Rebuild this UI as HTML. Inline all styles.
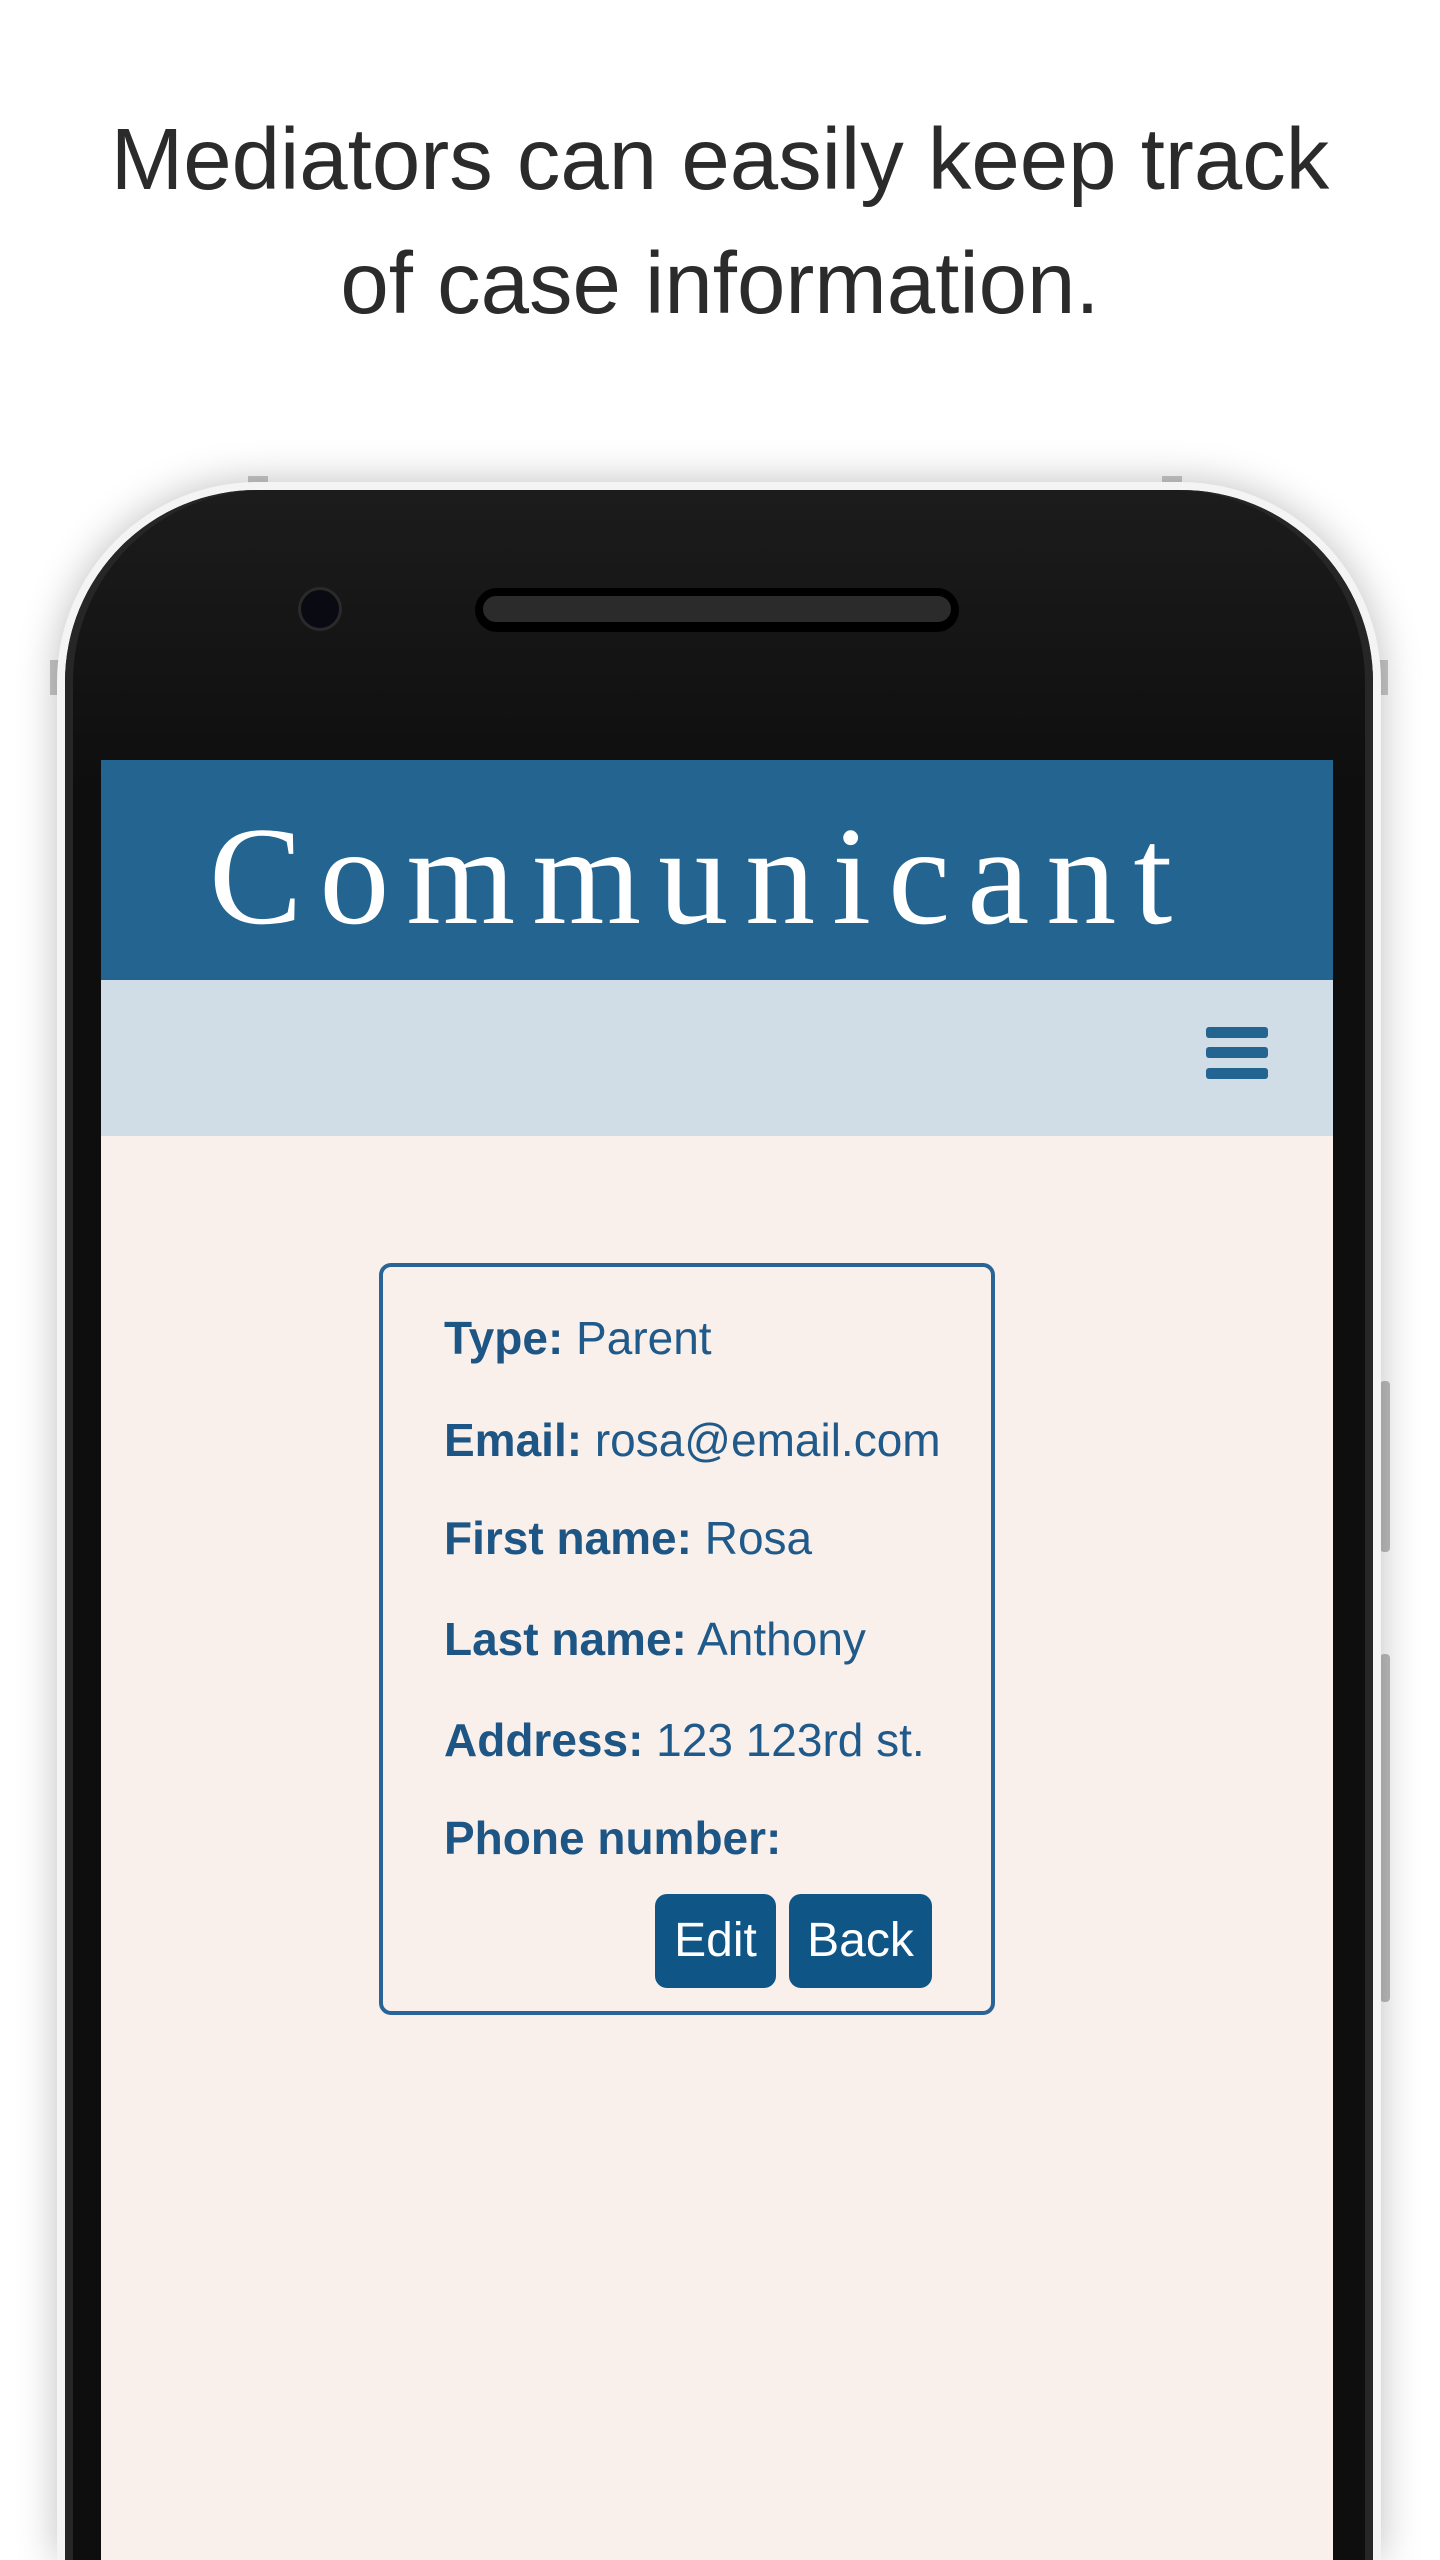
<!DOCTYPE html>
<html><head><meta charset="utf-8"><style>
html,body{margin:0;padding:0;width:1440px;height:2560px;background:#fff;overflow:hidden;position:relative;font-family:"Liberation Sans",sans-serif}
.h{position:absolute;left:0;width:1440px;top:98px;text-align:center;font-size:87px;line-height:124px;color:#2b2b2b}
.phone{position:absolute;left:57px;top:482px;width:1324px;height:2078px;border-radius:200px 200px 0 0;background:#f4f4f4;box-shadow:0 0 40px rgba(0,0,0,.25)}
.inner{position:absolute;left:65px;top:490px;width:1308px;height:2070px;border-radius:192px 192px 0 0;background:linear-gradient(#1c1c1c,#0e0e0e 300px);box-shadow:inset -8px 0 0 #262626,inset 8px 0 0 #262626}
.tab{position:absolute;background:#c8c8c8}
.cam{position:absolute;left:298px;top:587px;width:44px;height:44px;border-radius:50%;background:#0a0a12;border:3px solid #2a2a2a;box-sizing:border-box}
.spk{position:absolute;left:475px;top:588px;width:484px;height:44px;border-radius:22px;background:#000}
.spk i{position:absolute;left:8px;top:8px;right:8px;bottom:10px;border-radius:14px;background:#2b2b2b}
.screen{position:absolute;left:101px;top:760px;width:1232px;height:1800px;background:#f9f0eb;overflow:hidden}
.hd{position:absolute;left:0;top:0;width:1232px;height:220px;background:#246491}
.hd span{position:absolute;left:108px;top:42px;font-family:"Liberation Serif",serif;font-size:140px;letter-spacing:17px;color:#fff;line-height:150px;white-space:nowrap}
.nav{position:absolute;left:0;top:220px;width:1232px;height:156px;background:#d1dde6}
.bar{position:absolute;left:1105px;width:62px;height:11px;border-radius:3px;background:#246491}
.card{position:absolute;left:278px;top:503px;width:616px;height:752px;border:4px solid #2a6496;border-radius:12px;box-sizing:border-box}
.row{position:absolute;font-size:46px;line-height:56px;color:#1f5a8a;white-space:nowrap}
.row b{color:#1d5585}
.btn{position:absolute;top:1134px;height:94px;border-radius:12px;background:#0f5586;color:#fff;font-size:48px;line-height:94px;text-align:center}
</style></head><body>
<div class="h">Mediators can easily keep track<br>of case information.</div>
<div class="tab" style="left:248px;top:476px;width:20px;height:12px"></div>
<div class="tab" style="left:1162px;top:476px;width:20px;height:12px"></div>
<div class="tab" style="left:50px;top:660px;width:10px;height:35px"></div>
<div class="tab" style="left:1378px;top:660px;width:10px;height:35px"></div>
<div class="tab" style="left:1380px;top:1381px;width:10px;height:171px;border-radius:4px;background:#bdbdbd"></div>
<div class="tab" style="left:1380px;top:1654px;width:10px;height:348px;border-radius:4px;background:#bdbdbd"></div>
<div class="phone"></div>
<div class="inner"></div>
<div class="cam"></div>
<div class="spk"><i></i></div>
<div class="screen">
 <div class="hd"><span>Communicant</span></div>
 <div class="nav">
  <div class="bar" style="top:47px"></div><div class="bar" style="top:67px"></div><div class="bar" style="top:88px"></div>
 </div>
 <div class="card"></div>
 <div class="row" style="left:343px;top:550px"><b>Type:</b> Parent</div>
 <div class="row" style="left:343px;top:652px"><b>Email:</b> rosa@email.com</div>
 <div class="row" style="left:343px;top:750px"><b>First name:</b> Rosa</div>
 <div class="row" style="left:343px;top:851px"><b>Last name:</b> Anthony</div>
 <div class="row" style="left:343px;top:952px"><b>Address:</b> 123 123rd st.</div>
 <div class="row" style="left:343px;top:1050px"><b>Phone number:</b></div>
 <div class="btn" style="left:554px;width:121px">Edit</div>
 <div class="btn" style="left:688px;width:143px">Back</div>
</div>
</body></html>
